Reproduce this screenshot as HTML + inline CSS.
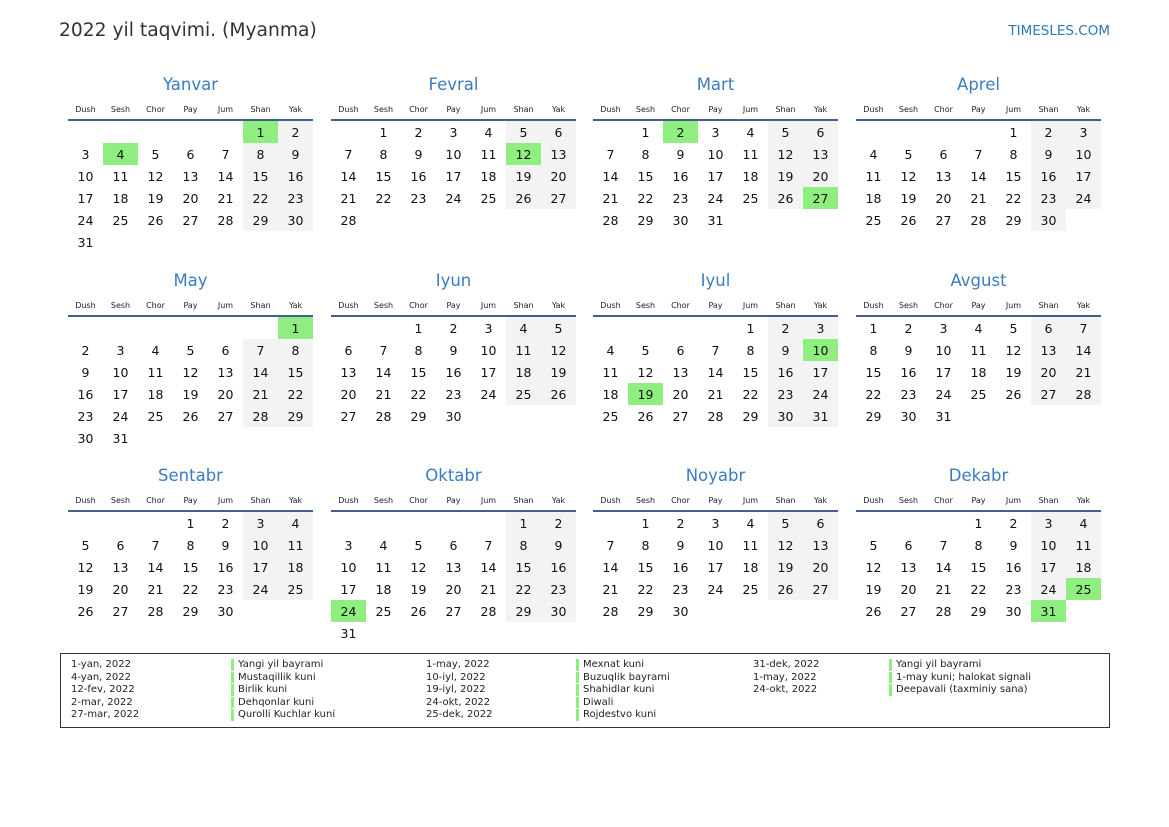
<!DOCTYPE html>
<html><head><meta charset="utf-8"><style>
*{margin:0;padding:0;box-sizing:border-box}
body{width:1169px;height:827px;background:#fff;position:relative;font-family:"DejaVu Sans","Liberation Sans",sans-serif;color:#111;overflow:hidden}
.t{position:absolute;left:59px;top:20px;font-size:18.7px;color:#333}
.s{position:absolute;right:59px;top:23px;font-size:13.5px;color:#2a7ab8}
.m{position:absolute;width:245px}
.m h2{font-weight:normal;font-size:16.5px;color:#3a7cc0;text-align:center;height:26px;line-height:26px}
table{border-collapse:collapse;width:245px;table-layout:fixed}
th{font-weight:normal;font-size:8px;height:18px;line-height:18px;padding-top:3px;color:#222;border-bottom:2px solid #445f8f}
td{width:35px;height:22px;text-align:center;font-size:12.5px;padding:1px 0 0 0;line-height:21px}
td.w{background:#f3f3f3}
td.h{background:#90ee80}
.lg{position:absolute;left:60px;top:653px;width:1050px;height:75px;border:1.5px solid #333}
.c{position:absolute;top:5px;font-size:10px;line-height:12.6px;color:#222}
.b{border-left:3px solid #90ee80;padding-left:4px;height:11.6px;margin-bottom:1px;line-height:11.6px}
</style></head><body>
<div class="t">2022 yil taqvimi. (Myanma)</div>
<div class="s">TIMESLES.COM</div>

<div class="m" style="left:68px;top:72px"><h2>Yanvar</h2><table><tr><th>Dush</th><th>Sesh</th><th>Chor</th><th>Pay</th><th>Jum</th><th>Shan</th><th>Yak</th></tr>
<tr><td></td><td></td><td></td><td></td><td></td><td class="h">1</td><td class="w">2</td></tr>
<tr><td>3</td><td class="h">4</td><td>5</td><td>6</td><td>7</td><td class="w">8</td><td class="w">9</td></tr>
<tr><td>10</td><td>11</td><td>12</td><td>13</td><td>14</td><td class="w">15</td><td class="w">16</td></tr>
<tr><td>17</td><td>18</td><td>19</td><td>20</td><td>21</td><td class="w">22</td><td class="w">23</td></tr>
<tr><td>24</td><td>25</td><td>26</td><td>27</td><td>28</td><td class="w">29</td><td class="w">30</td></tr>
<tr><td>31</td><td></td><td></td><td></td><td></td><td></td><td></td></tr></table></div>

<div class="m" style="left:331px;top:72px"><h2>Fevral</h2><table><tr><th>Dush</th><th>Sesh</th><th>Chor</th><th>Pay</th><th>Jum</th><th>Shan</th><th>Yak</th></tr>
<tr><td></td><td>1</td><td>2</td><td>3</td><td>4</td><td class="w">5</td><td class="w">6</td></tr>
<tr><td>7</td><td>8</td><td>9</td><td>10</td><td>11</td><td class="h">12</td><td class="w">13</td></tr>
<tr><td>14</td><td>15</td><td>16</td><td>17</td><td>18</td><td class="w">19</td><td class="w">20</td></tr>
<tr><td>21</td><td>22</td><td>23</td><td>24</td><td>25</td><td class="w">26</td><td class="w">27</td></tr>
<tr><td>28</td><td></td><td></td><td></td><td></td><td></td><td></td></tr></table></div>

<div class="m" style="left:593px;top:72px"><h2>Mart</h2><table><tr><th>Dush</th><th>Sesh</th><th>Chor</th><th>Pay</th><th>Jum</th><th>Shan</th><th>Yak</th></tr>
<tr><td></td><td>1</td><td class="h">2</td><td>3</td><td>4</td><td class="w">5</td><td class="w">6</td></tr>
<tr><td>7</td><td>8</td><td>9</td><td>10</td><td>11</td><td class="w">12</td><td class="w">13</td></tr>
<tr><td>14</td><td>15</td><td>16</td><td>17</td><td>18</td><td class="w">19</td><td class="w">20</td></tr>
<tr><td>21</td><td>22</td><td>23</td><td>24</td><td>25</td><td class="w">26</td><td class="h">27</td></tr>
<tr><td>28</td><td>29</td><td>30</td><td>31</td><td></td><td></td><td></td></tr></table></div>

<div class="m" style="left:856px;top:72px"><h2>Aprel</h2><table><tr><th>Dush</th><th>Sesh</th><th>Chor</th><th>Pay</th><th>Jum</th><th>Shan</th><th>Yak</th></tr>
<tr><td></td><td></td><td></td><td></td><td>1</td><td class="w">2</td><td class="w">3</td></tr>
<tr><td>4</td><td>5</td><td>6</td><td>7</td><td>8</td><td class="w">9</td><td class="w">10</td></tr>
<tr><td>11</td><td>12</td><td>13</td><td>14</td><td>15</td><td class="w">16</td><td class="w">17</td></tr>
<tr><td>18</td><td>19</td><td>20</td><td>21</td><td>22</td><td class="w">23</td><td class="w">24</td></tr>
<tr><td>25</td><td>26</td><td>27</td><td>28</td><td>29</td><td class="w">30</td><td></td></tr></table></div>

<div class="m" style="left:68px;top:268px"><h2>May</h2><table><tr><th>Dush</th><th>Sesh</th><th>Chor</th><th>Pay</th><th>Jum</th><th>Shan</th><th>Yak</th></tr>
<tr><td></td><td></td><td></td><td></td><td></td><td></td><td class="h">1</td></tr>
<tr><td>2</td><td>3</td><td>4</td><td>5</td><td>6</td><td class="w">7</td><td class="w">8</td></tr>
<tr><td>9</td><td>10</td><td>11</td><td>12</td><td>13</td><td class="w">14</td><td class="w">15</td></tr>
<tr><td>16</td><td>17</td><td>18</td><td>19</td><td>20</td><td class="w">21</td><td class="w">22</td></tr>
<tr><td>23</td><td>24</td><td>25</td><td>26</td><td>27</td><td class="w">28</td><td class="w">29</td></tr>
<tr><td>30</td><td>31</td><td></td><td></td><td></td><td></td><td></td></tr></table></div>

<div class="m" style="left:331px;top:268px"><h2>Iyun</h2><table><tr><th>Dush</th><th>Sesh</th><th>Chor</th><th>Pay</th><th>Jum</th><th>Shan</th><th>Yak</th></tr>
<tr><td></td><td></td><td>1</td><td>2</td><td>3</td><td class="w">4</td><td class="w">5</td></tr>
<tr><td>6</td><td>7</td><td>8</td><td>9</td><td>10</td><td class="w">11</td><td class="w">12</td></tr>
<tr><td>13</td><td>14</td><td>15</td><td>16</td><td>17</td><td class="w">18</td><td class="w">19</td></tr>
<tr><td>20</td><td>21</td><td>22</td><td>23</td><td>24</td><td class="w">25</td><td class="w">26</td></tr>
<tr><td>27</td><td>28</td><td>29</td><td>30</td><td></td><td></td><td></td></tr></table></div>

<div class="m" style="left:593px;top:268px"><h2>Iyul</h2><table><tr><th>Dush</th><th>Sesh</th><th>Chor</th><th>Pay</th><th>Jum</th><th>Shan</th><th>Yak</th></tr>
<tr><td></td><td></td><td></td><td></td><td>1</td><td class="w">2</td><td class="w">3</td></tr>
<tr><td>4</td><td>5</td><td>6</td><td>7</td><td>8</td><td class="w">9</td><td class="h">10</td></tr>
<tr><td>11</td><td>12</td><td>13</td><td>14</td><td>15</td><td class="w">16</td><td class="w">17</td></tr>
<tr><td>18</td><td class="h">19</td><td>20</td><td>21</td><td>22</td><td class="w">23</td><td class="w">24</td></tr>
<tr><td>25</td><td>26</td><td>27</td><td>28</td><td>29</td><td class="w">30</td><td class="w">31</td></tr></table></div>

<div class="m" style="left:856px;top:268px"><h2>Avgust</h2><table><tr><th>Dush</th><th>Sesh</th><th>Chor</th><th>Pay</th><th>Jum</th><th>Shan</th><th>Yak</th></tr>
<tr><td>1</td><td>2</td><td>3</td><td>4</td><td>5</td><td class="w">6</td><td class="w">7</td></tr>
<tr><td>8</td><td>9</td><td>10</td><td>11</td><td>12</td><td class="w">13</td><td class="w">14</td></tr>
<tr><td>15</td><td>16</td><td>17</td><td>18</td><td>19</td><td class="w">20</td><td class="w">21</td></tr>
<tr><td>22</td><td>23</td><td>24</td><td>25</td><td>26</td><td class="w">27</td><td class="w">28</td></tr>
<tr><td>29</td><td>30</td><td>31</td><td></td><td></td><td></td><td></td></tr></table></div>

<div class="m" style="left:68px;top:463px"><h2>Sentabr</h2><table><tr><th>Dush</th><th>Sesh</th><th>Chor</th><th>Pay</th><th>Jum</th><th>Shan</th><th>Yak</th></tr>
<tr><td></td><td></td><td></td><td>1</td><td>2</td><td class="w">3</td><td class="w">4</td></tr>
<tr><td>5</td><td>6</td><td>7</td><td>8</td><td>9</td><td class="w">10</td><td class="w">11</td></tr>
<tr><td>12</td><td>13</td><td>14</td><td>15</td><td>16</td><td class="w">17</td><td class="w">18</td></tr>
<tr><td>19</td><td>20</td><td>21</td><td>22</td><td>23</td><td class="w">24</td><td class="w">25</td></tr>
<tr><td>26</td><td>27</td><td>28</td><td>29</td><td>30</td><td></td><td></td></tr></table></div>

<div class="m" style="left:331px;top:463px"><h2>Oktabr</h2><table><tr><th>Dush</th><th>Sesh</th><th>Chor</th><th>Pay</th><th>Jum</th><th>Shan</th><th>Yak</th></tr>
<tr><td></td><td></td><td></td><td></td><td></td><td class="w">1</td><td class="w">2</td></tr>
<tr><td>3</td><td>4</td><td>5</td><td>6</td><td>7</td><td class="w">8</td><td class="w">9</td></tr>
<tr><td>10</td><td>11</td><td>12</td><td>13</td><td>14</td><td class="w">15</td><td class="w">16</td></tr>
<tr><td>17</td><td>18</td><td>19</td><td>20</td><td>21</td><td class="w">22</td><td class="w">23</td></tr>
<tr><td class="h">24</td><td>25</td><td>26</td><td>27</td><td>28</td><td class="w">29</td><td class="w">30</td></tr>
<tr><td>31</td><td></td><td></td><td></td><td></td><td></td><td></td></tr></table></div>

<div class="m" style="left:593px;top:463px"><h2>Noyabr</h2><table><tr><th>Dush</th><th>Sesh</th><th>Chor</th><th>Pay</th><th>Jum</th><th>Shan</th><th>Yak</th></tr>
<tr><td></td><td>1</td><td>2</td><td>3</td><td>4</td><td class="w">5</td><td class="w">6</td></tr>
<tr><td>7</td><td>8</td><td>9</td><td>10</td><td>11</td><td class="w">12</td><td class="w">13</td></tr>
<tr><td>14</td><td>15</td><td>16</td><td>17</td><td>18</td><td class="w">19</td><td class="w">20</td></tr>
<tr><td>21</td><td>22</td><td>23</td><td>24</td><td>25</td><td class="w">26</td><td class="w">27</td></tr>
<tr><td>28</td><td>29</td><td>30</td><td></td><td></td><td></td><td></td></tr></table></div>

<div class="m" style="left:856px;top:463px"><h2>Dekabr</h2><table><tr><th>Dush</th><th>Sesh</th><th>Chor</th><th>Pay</th><th>Jum</th><th>Shan</th><th>Yak</th></tr>
<tr><td></td><td></td><td></td><td>1</td><td>2</td><td class="w">3</td><td class="w">4</td></tr>
<tr><td>5</td><td>6</td><td>7</td><td>8</td><td>9</td><td class="w">10</td><td class="w">11</td></tr>
<tr><td>12</td><td>13</td><td>14</td><td>15</td><td>16</td><td class="w">17</td><td class="w">18</td></tr>
<tr><td>19</td><td>20</td><td>21</td><td>22</td><td>23</td><td class="w">24</td><td class="h">25</td></tr>
<tr><td>26</td><td>27</td><td>28</td><td>29</td><td>30</td><td class="h">31</td><td></td></tr></table></div>

<div class="lg">
<div class="c" style="left:10px;top:5px">1-yan, 2022<br>4-yan, 2022<br>12-fev, 2022<br>2-mar, 2022<br>27-mar, 2022</div>
<div class="c" style="left:170px"><div class="b">Yangi yil bayrami</div><div class="b">Mustaqillik kuni</div><div class="b">Birlik kuni</div><div class="b">Dehqonlar kuni</div><div class="b">Qurolli Kuchlar kuni</div></div>
<div class="c" style="left:365px">1-may, 2022<br>10-iyl, 2022<br>19-iyl, 2022<br>24-okt, 2022<br>25-dek, 2022</div>
<div class="c" style="left:515px"><div class="b">Mexnat kuni</div><div class="b">Buzuqlik bayrami</div><div class="b">Shahidlar kuni</div><div class="b">Diwali</div><div class="b">Rojdestvo kuni</div></div>
<div class="c" style="left:692px">31-dek, 2022<br>1-may, 2022<br>24-okt, 2022</div>
<div class="c" style="left:828px"><div class="b">Yangi yil bayrami</div><div class="b">1-may kuni; halokat signali</div><div class="b">Deepavali (taxminiy sana)</div></div>
</div>
</body></html>
